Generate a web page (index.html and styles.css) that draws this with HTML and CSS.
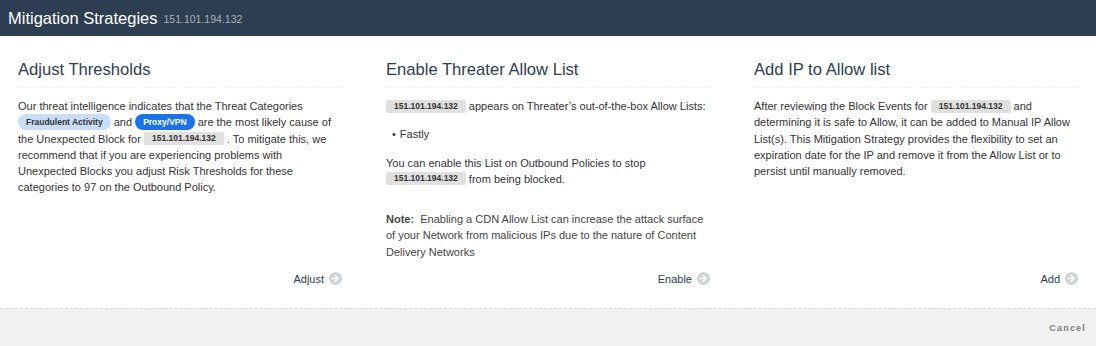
FILE: index.html
```html
<!DOCTYPE html>
<html lang="en">
<head>
    <meta charset="UTF-8">
    <title>Mitigation Strategies</title>
    <link rel="stylesheet" href="styles.css">
</head>
<body>
    <div class="modal">
        <div class="modal-header">
            <span class="modal-title">Mitigation Strategies</span>
            <span class="modal-ip">151.101.194.132</span>
        </div>
        <div class="modal-body">
            <div class="strategy">
                <h2>Adjust Thresholds</h2>
                <div class="strategy-text">
                    <p>Our threat intelligence indicates that the Threat Categories
                    <span class="pill pill-light">Fraudulent Activity</span> and
                    <span class="pill pill-blue">Proxy/VPN</span> are the most likely cause of
                    the Unexpected Block for <span class="ip">151.101.194.132</span> . To mitigate this, we
                    recommend that if you are experiencing problems with
                    Unexpected Blocks you adjust Risk Thresholds for these
                    categories to 97 on the Outbound Policy.</p>
                </div>
                <a class="action">Adjust <span class="arrow"><svg viewBox="0 0 12 12" width="13" height="13"><circle cx="6" cy="6" r="6" fill="#cfd3d8"/><path d="M3 6h5.4M6 3.5 8.5 6 6 8.5" stroke="#fff" stroke-width="1.5" fill="none" stroke-linecap="round" stroke-linejoin="round"/></svg></span></a>
            </div>
            <div class="strategy">
                <h2>Enable Threater Allow List</h2>
                <div class="strategy-text">
                    <p class="single"><span class="ip">151.101.194.132</span> appears on Threater’s out-of-the-box Allow Lists:</p>
                    <ul>
                        <li>Fastly</li>
                    </ul>
                    <p>You can enable this List on Outbound Policies to stop
                    <span class="ip">151.101.194.132</span> from being blocked.</p>
                    <p class="note"><b>Note:</b>&nbsp; Enabling a CDN Allow List can increase the attack surface
                    of your Network from malicious IPs due to the nature of Content
                    Delivery Networks</p>
                </div>
                <a class="action">Enable <span class="arrow"><svg viewBox="0 0 12 12" width="13" height="13"><circle cx="6" cy="6" r="6" fill="#cfd3d8"/><path d="M3 6h5.4M6 3.5 8.5 6 6 8.5" stroke="#fff" stroke-width="1.5" fill="none" stroke-linecap="round" stroke-linejoin="round"/></svg></span></a>
            </div>
            <div class="strategy">
                <h2>Add IP to Allow list</h2>
                <div class="strategy-text">
                    <p>After reviewing the Block Events for <span class="ip">151.101.194.132</span> and
                    determining it is safe to Allow, it can be added to Manual IP Allow
                    List(s). This Mitigation Strategy provides the flexibility to set an
                    expiration date for the IP and remove it from the Allow List or to
                    persist until manually removed.</p>
                </div>
                <a class="action">Add <span class="arrow"><svg viewBox="0 0 12 12" width="13" height="13"><circle cx="6" cy="6" r="6" fill="#cfd3d8"/><path d="M3 6h5.4M6 3.5 8.5 6 6 8.5" stroke="#fff" stroke-width="1.5" fill="none" stroke-linecap="round" stroke-linejoin="round"/></svg></span></a>
            </div>
        </div>
        <div class="modal-footer">
            <a class="cancel">Cancel</a>
        </div>
    </div>
</body>
</html>
```
FILE: styles.css
```css
body {
    margin: 0;
    font-family: "Liberation Sans", Arial, sans-serif;
    color: #333;
    background: #fff;
}
.modal-header {
    height: 36px;
    background-color: #2e3e52;
    display: flex;
    align-items: center;
    padding: 0 8px;
    box-sizing: border-box;
}
.modal-title {
    color: #fff;
    font-size: 16.5px;
}
.modal-ip {
    color: #a9b2bd;
    font-size: 10.5px;
    margin-left: 6px;
    margin-top: 2px;
}
.modal-body {
    display: grid;
    grid-template-columns: repeat(3, 1fr);
    column-gap: 44px;
    padding: 0 18px;
    height: 272px;
}
.strategy {
    display: flex;
    flex-direction: column;
    padding-bottom: 23px;
}
.strategy h2 {
    font-size: 16.6px;
    font-weight: normal;
    color: #2c3e50;
    margin: 24px 0 0;
    padding-bottom: 7px;
    border-bottom: 1px dashed #eceef0;
}
.strategy-text {
    flex: 1;
    font-size: 11px;
    line-height: 16.3px;
    padding-top: 10px;
}
.strategy-text p {
    margin: 0 0 12px;
}
.strategy-text .single {
    white-space: nowrap;
}
.strategy-text ul {
    margin: 0 0 12px;
    padding-left: 6px;
    list-style: none;
}
.strategy-text li::before {
    content: "•";
    margin-right: 4px;
}
.strategy-text .note {
    margin-top: 24px;
    color: #444;
}
.pill {
    display: inline-block;
    font-size: 8.5px;
    font-weight: bold;
    line-height: 16px;
    padding: 0 8px;
    border-radius: 8px;
    vertical-align: middle;
    margin-top: -2px;
}
.pill-light {
    background-color: #c9ddf6;
    color: #333;
}
.pill-blue {
    background-color: #1a73e8;
    color: #fff;
}
.ip {
    display: inline-block;
    background-color: #e0e0e0;
    font-size: 8.5px;
    font-weight: bold;
    line-height: 13px;
    padding: 0 8px;
    border-radius: 2px;
    color: #333;
    vertical-align: middle;
    margin-top: -2px;
}
.action {
    align-self: flex-end;
    display: flex;
    align-items: center;
    font-size: 11px;
    color: #2c3e50;
    cursor: pointer;
}
.arrow {
    display: inline-flex;
    margin-left: 5px;
}
.modal-footer {
    height: 38px;
    background-color: #f2f2f2;
    border-top: 1px dashed #d8d8d8;
    display: flex;
    align-items: center;
    justify-content: flex-end;
    padding-right: 10px;
}
.cancel {
    font-size: 9px;
    font-weight: bold;
    letter-spacing: 1.2px;
    color: #7d7d7d;
    cursor: pointer;
}
```
